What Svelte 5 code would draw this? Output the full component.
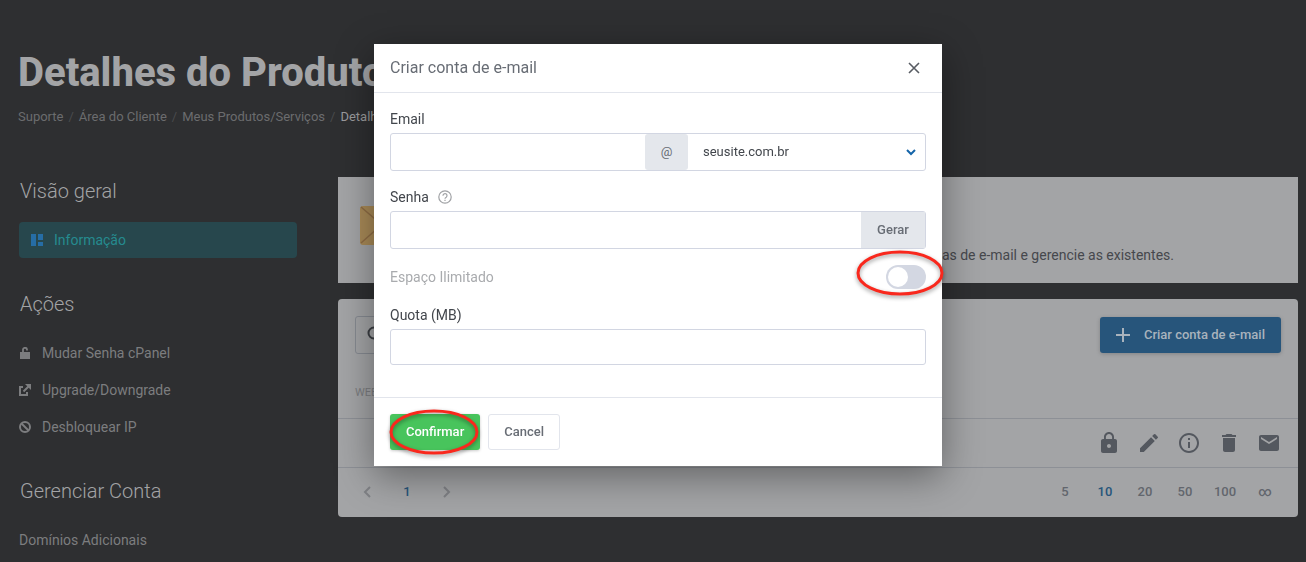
<script lang="ts">
    let user = $state('');
    let password = $state('');
    let unlimited = $state(false);
    let quota = $state('');
    let search = $state('');

    const crumbs = ['Suporte', 'Área do Cliente', 'Meus Produtos/Serviços'];

    const actions = [
        { label: 'Mudar Senha cPanel', icon: 'unlock' },
        { label: 'Upgrade/Downgrade', icon: 'external' },
        { label: 'Desbloquear IP', icon: 'ban' }
    ];

    const rowIcons = [
        { label: 'Senha', path: 'M18 8h-1V6c0-2.76-2.24-5-5-5S7 3.24 7 6v2H6c-1.1 0-2 .9-2 2v10c0 1.1.9 2 2 2h12c1.1 0 2-.9 2-2V10c0-1.1-.9-2-2-2zm-6 9c-1.1 0-2-.9-2-2s.9-2 2-2 2 .9 2 2-.9 2-2 2zm3.1-9H8.9V6c0-1.71 1.39-3.1 3.1-3.1s3.1 1.39 3.1 3.1v2z' },
        { label: 'Editar', path: 'M3 17.25V21h3.75L17.81 9.94l-3.75-3.75L3 17.25zM20.71 7.04a1 1 0 0 0 0-1.41l-2.34-2.34a1 1 0 0 0-1.41 0l-1.83 1.83 3.75 3.75 1.83-1.83z' },
        { label: 'Detalhes', path: 'M11 17h2v-6h-2v6zm1-15C6.48 2 2 6.48 2 12s4.48 10 10 10 10-4.48 10-10S17.52 2 12 2zm0 18c-4.41 0-8-3.59-8-8s3.59-8 8-8 8 3.59 8 8-3.59 8-8 8zM11 9h2V7h-2v2z' },
        { label: 'Excluir', path: 'M6 19c0 1.1.9 2 2 2h8c1.1 0 2-.9 2-2V7H6v12zM19 4h-3.5l-1-1h-5l-1 1H5v2h14V4z' },
        { label: 'Webmail', path: 'M20 4H4c-1.1 0-1.99.9-1.99 2L2 18c0 1.1.9 2 2 2h16c1.1 0 2-.9 2-2V6c0-1.1-.9-2-2-2zm0 4l-8 5-8-5V6l8 5 8-5v2z' }
    ];

    const pageSizes = ['5', '10', '20', '50', '100', '∞'];
</script>

<div class="page">
    <header class="page-header">
        <h1>Detalhes do Produto</h1>
        <nav class="breadcrumb">
            {#each crumbs as crumb}
                <a href="#top">{crumb}</a>
                <span class="sep">/</span>
            {/each}
            <span class="current">Detalhes</span>
        </nav>
    </header>

    <div class="layout">
        <aside class="sidebar">
            <section>
                <h2>Visão geral</h2>
                <a class="nav-item active" href="#info">
                    <svg width="12" height="12" viewBox="0 0 12 12" fill="currentColor">
                        <path d="M0 0h5v12H0zM7 0h5v6H7zM7 8h5v4H7z" />
                    </svg>
                    <span>Informação</span>
                </a>
            </section>

            <section>
                <h2>Ações</h2>
                {#each actions as action}
                    <a class="nav-item" href="#{action.icon}">
                        <svg width="12" height="12" viewBox="0 0 12 12" fill="none" stroke="currentColor" stroke-width="2">
                            {#if action.icon === 'unlock'}
                                <path d="M1 5h10v7H1z" fill="currentColor" stroke="none" />
                                <path d="M4 6V3a2 2 0 0 1 4-.4v1" stroke-width="1.8" />
                            {:else if action.icon === 'external'}
                                <path d="M4 3H1v8h7V8M4.500 7.500L9.500 2.500" />
                                <path d="M6 0h6v6z" fill="currentColor" stroke="none" />
                            {:else}
                                <circle cx="6" cy="6" r="5" />
                                <path d="M2.500 2.500l7 7" />
                            {/if}
                        </svg>
                        <span>{action.label}</span>
                    </a>
                {/each}
            </section>

            <section>
                <h2>Gerenciar Conta</h2>
                <a class="nav-item" href="#domains">Domínios Adicionais</a>
            </section>
        </aside>

        <main class="content">
            <div class="intro">
                <svg width="56" height="39" viewBox="0 0 56 39">
                    <rect width="56" height="39" rx="3" fill="#a98a57" />
                    <path d="M1 1l27 23L55 1M1 37l18-16M55 37L37 21" fill="none" stroke="#8f6d45" stroke-width="1.500" />
                </svg>
                <p>Crie contas de e-mail e gerencie as existentes.</p>
            </div>

            <div class="panel">
                <div class="toolbar">
                    <label class="search">
                        <svg width="18" height="18" viewBox="0 0 18 18" fill="none" stroke="currentColor" stroke-width="2">
                            <circle cx="7" cy="7" r="5.500" />
                            <path d="M11 11l6 6" />
                        </svg>
                        <input type="search" aria-label="Pesquisar" bind:value={search} />
                    </label>
                    <button class="btn btn-blue" type="button">
                        <svg width="14" height="14" viewBox="0 0 14 14" stroke="currentColor" stroke-width="2">
                            <path d="M7 0v14M0 7h14" />
                        </svg>
                        Criar conta de e-mail
                    </button>
                </div>
                <table>
                    <thead>
                        <tr><th>WEBMAIL</th><th></th></tr>
                    </thead>
                    <tbody>
                        <tr>
                            <td></td>
                            <td>
                                <div class="row-actions">
                                    {#each rowIcons as icon}
                                        <button type="button" aria-label={icon.label}>
                                            <svg width="24" height="24" viewBox="0 0 24 24" fill="currentColor">
                                                <path d={icon.path} />
                                            </svg>
                                        </button>
                                    {/each}
                                </div>
                            </td>
                        </tr>
                    </tbody>
                </table>
                <div class="pager">
                    <div class="pages">
                        <button type="button" class="arrow" aria-label="Anterior">
                            <svg width="8" height="12" viewBox="0 0 8 12" fill="none" stroke="currentColor" stroke-width="2"><path d="M7 1L2 6l5 5" /></svg>
                        </button>
                        <button type="button" class="selected">1</button>
                        <button type="button" class="arrow" aria-label="Próxima">
                            <svg width="8" height="12" viewBox="0 0 8 12" fill="none" stroke="currentColor" stroke-width="2"><path d="M1 1l5 5-5 5" /></svg>
                        </button>
                    </div>
                    <div class="pages">
                        {#each pageSizes as size}
                            <button type="button" class:selected={size === '10'}>{size}</button>
                        {/each}
                    </div>
                </div>
            </div>
        </main>
    </div>
</div>

<div class="overlay">
    <div class="modal" role="dialog" aria-labelledby="modal-title">
        <div class="modal-header">
            <h3 id="modal-title">Criar conta de e-mail</h3>
            <button class="close" type="button" aria-label="Fechar">
                <svg width="12" height="12" viewBox="0 0 12 12" fill="none" stroke="currentColor" stroke-width="1.600">
                    <path d="M1 1l10 10M11 1L1 11" />
                </svg>
            </button>
        </div>

        <div class="modal-body">
            <div class="field">
                <label for="email">Email</label>
                <div class="group">
                    <input id="email" type="text" bind:value={user} />
                    <span class="addon">@</span>
                    <div class="select">
                        <select aria-label="Domínio">
                            <option>seusite.com.br</option>
                        </select>
                        <svg width="10" height="7" viewBox="0 0 10 7" fill="none" stroke="currentColor" stroke-width="2">
                            <path d="M1 1l4 4 4-4" />
                        </svg>
                    </div>
                </div>
            </div>

            <div class="field">
                <div class="label-row">
                    <label for="password">Senha</label>
                    <svg width="14" height="14" viewBox="0 0 14 14" fill="none" stroke="currentColor" stroke-width="1.200">
                        <circle cx="7" cy="7" r="6.200" />
                        <path d="M5 5.700a2 2 0 1 1 3.200 1.500C7.400 7.700 7 8 7 8.800M7 9.700v1.200" />
                    </svg>
                </div>
                <div class="group">
                    <input id="password" type="password" bind:value={password} />
                    <button class="generate" type="button">Gerar</button>
                </div>
            </div>

            <div class="toggle-row">
                <label for="unlimited">Espaço Ilimitado</label>
                <div class="marked">
                    <input id="unlimited" class="switch" type="checkbox" bind:checked={unlimited} />
                    <svg class="ring ring-switch" width="96" height="56" viewBox="0 0 96 56">
                        <ellipse cx="48" cy="28" rx="42" ry="21" />
                    </svg>
                </div>
            </div>

            <div class="field">
                <label for="quota">Quota (MB)</label>
                <input id="quota" class="box" type="text" bind:value={quota} />
            </div>
        </div>

        <div class="modal-footer">
            <div class="marked">
                <button class="btn btn-green" type="button">Confirmar</button>
                <svg class="ring ring-confirm" width="96" height="56" viewBox="0 0 96 56">
                    <ellipse cx="48" cy="28" rx="43" ry="21" />
                </svg>
            </div>
            <button class="btn btn-plain" type="button">Cancel</button>
        </div>
    </div>
</div>

<style>
    :global(body) {
        background: #2e2f31;
        color: #a3a4a6;
        font-family: Roboto, sans-serif;
        font-size: 14px;
        line-height: 20px;
    }

    h1, h2, h3, p {
        margin: 0;
    }

    a {
        color: inherit;
        text-decoration: none;
    }

    svg {
        flex: none;
        display: block;
    }

    button, input, select {
        box-sizing: border-box;
        margin: 0;
        padding: 0;
        border: none;
        outline: none;
        background: none;
        color: inherit;
        font: inherit;
    }

    button {
        cursor: pointer;
    }

    .page {
        padding: 49px 8px 0 18px;
    }

    h1 {
        font-size: 40px;
        line-height: 48px;
        font-weight: 800;
    }

    .breadcrumb {
        display: flex;
        gap: 5px;
        margin-top: 10px;
        font-size: 13px;
        color: #6b6c6e;
    }

    .breadcrumb .sep {
        color: #4a4b4d;
    }

    .breadcrumb .current {
        color: #9a9b9d;
    }

    .layout {
        display: grid;
        grid-template-columns: 278px minmax(0, 1fr);
        gap: 41px;
        margin-top: 50px;
        padding-left: 1px;
    }

    /* Sidebar */
    .sidebar {
        display: flex;
        flex-direction: column;
        gap: 32px;
    }

    .sidebar section {
        display: flex;
        flex-direction: column;
        gap: 1px;
    }

    h2 {
        margin-bottom: 16px;
        padding-left: 1px;
        font-size: 20px;
        line-height: 28px;
        font-weight: 300;
    }

    .nav-item {
        display: flex;
        align-items: center;
        gap: 11px;
        height: 36px;
        color: #7c7d7f;
    }

    .nav-item.active {
        padding: 0 12px;
        border-radius: 4px;
        background: #27474d;
        color: #258b8f;
    }

    .nav-item.active svg {
        color: #266da5;
    }

    /* Main column */
    .content {
        display: flex;
        flex-direction: column;
        gap: 16px;
    }

    .intro {
        display: flex;
        justify-content: space-between;
        align-items: flex-end;
        padding: 29px 124px 18px 22px;
        background: #a3a4a6;
        color: #46484d;
    }

    .intro svg {
        margin-bottom: 20px;
    }

    .panel {
        border-radius: 4px;
        background: #a3a4a6;
        color: #62666d;
    }

    .toolbar {
        display: flex;
        justify-content: space-between;
        align-items: center;
        padding: 17px 17px 0;
    }

    .search {
        display: flex;
        align-items: center;
        gap: 8px;
        box-sizing: border-box;
        width: 320px;
        height: 38px;
        padding: 0 11px;
        border: 1px solid #868a91;
        border-radius: 3px;
        color: #3c3f44;
    }

    .search input {
        flex: 1;
        min-width: 0;
    }

    .btn {
        display: flex;
        align-items: center;
        gap: 14px;
        height: 36px;
        padding: 0 16px;
        border-radius: 3px;
        font-size: 13px;
        font-weight: 500;
    }

    .btn-blue {
        background: #27557b;
        color: #a9b3bd;
        box-shadow: 0 1px 4px rgba(0, 0, 0, 0.2);
    }

    table {
        width: 100%;
        border-collapse: collapse;
    }

    th {
        height: 30px;
        padding: 24px 17px 10px;
        font-size: 11px;
        font-weight: 400;
        text-align: left;
        color: #7b7d80;
    }

    td {
        height: 48px;
        padding: 0;
        border-top: 1px solid #8d9096;
        border-bottom: 1px solid #8d9096;
    }

    .row-actions {
        display: flex;
        justify-content: flex-end;
        gap: 16px;
        padding-right: 17px;
        color: #54585f;
    }

    .pager {
        display: flex;
        justify-content: space-between;
        height: 47px;
        padding: 0 13px 2px 9px;
    }

    .pages {
        display: flex;
    }

    .pages button {
        display: flex;
        align-items: center;
        justify-content: center;
        width: 40px;
        font-size: 13px;
        font-weight: 500;
    }

    .pages .selected {
        color: #27557b;
    }

    .pages .arrow {
        color: #7f8185;
    }

    /* Modal */
    .overlay {
        position: fixed;
        inset: 0;
        display: flex;
        justify-content: center;
        align-items: flex-start;
        padding: 44px 0 0 10px;
    }

    .modal {
        width: 568px;
        background: #fff;
        color: #42464c;
        box-shadow: 0 10px 36px rgba(0, 0, 0, 0.4);
    }

    .modal-header {
        display: flex;
        justify-content: space-between;
        align-items: center;
        height: 48px;
        padding: 0 16px;
        border-bottom: 1px solid #e2e5ec;
    }

    h3 {
        font-size: 16px;
        line-height: 24px;
        font-weight: 400;
        color: #686d75;
    }

    .close {
        padding: 6px;
        color: #585c63;
    }

    .modal-body {
        display: flex;
        flex-direction: column;
        gap: 16px;
        padding: 16px 16px 32px;
    }

    .field {
        display: flex;
        flex-direction: column;
        gap: 4px;
    }

    .label-row {
        display: flex;
        align-items: center;
        gap: 9px;
    }

    .label-row svg {
        color: #a0a2a5;
    }

    .group {
        display: flex;
        height: 36px;
        border: 1px solid #d2d6e2;
        border-radius: 3px;
    }

    .group input {
        flex: 1;
        min-width: 0;
        padding: 0 15px;
    }

    .addon {
        display: flex;
        align-items: center;
        justify-content: center;
        width: 43px;
        border-radius: 3px;
        background: #e4e7ec;
        color: #686d75;
        font-size: 13px;
    }

    .select {
        display: grid;
        align-items: center;
        width: 237px;
        color: #1565a9;
    }

    .select select,
    .select svg {
        grid-area: 1 / 1;
    }

    .select select {
        height: 36px;
        padding: 0 32px 0 15px;
        appearance: none;
        color: #42464c;
        font-size: 13px;
    }

    .select svg {
        justify-self: end;
        margin-right: 9px;
        pointer-events: none;
    }

    .generate {
        width: 64px;
        background: #e4e7ec;
        color: #686d75;
        font-size: 13px;
        font-weight: 500;
    }

    .toggle-row {
        display: flex;
        justify-content: space-between;
        align-items: center;
        height: 24px;
        color: #a9abae;
    }

    .switch {
        display: block;
        width: 40px;
        height: 24px;
        padding: 2px;
        border-radius: 12px;
        appearance: none;
        background: #d3d7e2;
    }

    .switch::before {
        content: '';
        display: block;
        width: 20px;
        height: 20px;
        border-radius: 50%;
        background: #fff;
    }

    .switch:checked::before {
        margin-left: 16px;
    }

    .box {
        height: 36px;
        padding: 0 15px;
        border: 1px solid #d2d6e2;
        border-radius: 3px;
    }

    .modal-footer {
        display: flex;
        gap: 8px;
        padding: 16px;
        border-top: 1px solid #e2e5ec;
    }

    .btn-green {
        background: #48c45c;
        color: #fff;
        box-shadow: 0 1px 3px rgba(0, 0, 0, 0.2);
    }

    .btn-plain {
        padding: 0 15px;
        border: 1px solid #e2e5ec;
        color: #686d75;
    }

    .marked {
        position: relative;
    }

    .ring {
        position: absolute;
        fill: none;
        stroke: #f9281d;
        stroke-width: 3;
        filter: drop-shadow(0 2px 2px rgba(0, 0, 0, 0.4));
        pointer-events: none;
    }

    .ring-switch {
        top: -20px;
        right: -22px;
    }

    .ring-confirm {
        top: -10px;
        left: -4px;
    }
</style>
